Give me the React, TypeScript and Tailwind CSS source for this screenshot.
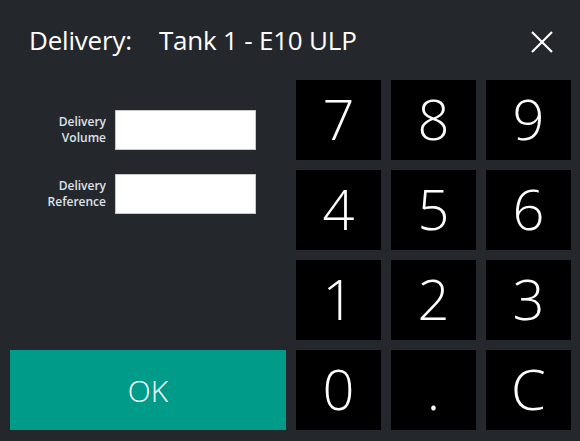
import React, { useState } from 'react';

const KEYS = ['7', '8', '9', '4', '5', '6', '1', '2', '3', '0', '.', 'C'];

const App: React.FC = () => {
    const [volume, setVolume] = useState('');
    const [reference, setReference] = useState('');

    const press = (k: string) => {
        if (k === 'C') {
            setVolume('');
            return;
        }
        setVolume(v => v + k);
    };

    return (
        <div
            className="w-[580px] h-[441px] bg-[#24282c] text-white overflow-hidden"
            style={{ fontFamily: '"Open Sans", "Noto Sans", sans-serif' }}
        >
            {/* header */}
            <div className="h-[80px] flex items-center justify-between pl-[29px] pr-[27px]">
                <h1 className="text-[26px] leading-none tracking-[-0.2px]">
                    <span>Delivery:</span>
                    <span className="ml-[27px]">Tank 1 - E10 ULP</span>
                </h1>
                <button className="w-[22px] h-[22px] flex items-center justify-center mt-[4px]">
                    <svg width="22" height="22" viewBox="0 0 22 22" fill="none" stroke="#ffffff" strokeWidth="2.2">
                        <line x1="1" y1="1" x2="21" y2="21" />
                        <line x1="21" y1="1" x2="1" y2="21" />
                    </svg>
                </button>
            </div>

            <div className="flex gap-[10px] pl-[10px]">
                {/* left column */}
                <div className="w-[276px] h-[350px] flex flex-col justify-between">
                    <div className="flex flex-col gap-[24px] pt-[30px]">
                        <div className="flex items-center gap-[9px]">
                            <label className="w-[96px] text-right text-[12px] leading-[16px] font-semibold text-[#dde3ea]">
                                Delivery<br />Volume
                            </label>
                            <input
                                value={volume}
                                onChange={e => setVolume(e.target.value)}
                                className="w-[141px] h-[40px] bg-white border border-[#c8c8c8] text-black px-2 outline-none"
                            />
                        </div>
                        <div className="flex items-center gap-[9px]">
                            <label className="w-[96px] text-right text-[12px] leading-[16px] font-semibold text-[#dde3ea]">
                                Delivery<br />Reference
                            </label>
                            <input
                                value={reference}
                                onChange={e => setReference(e.target.value)}
                                className="w-[141px] h-[40px] bg-white border border-[#c8c8c8] text-black px-2 outline-none"
                            />
                        </div>
                    </div>
                    <button className="h-[80px] w-full bg-[#009b89] text-[30px] font-light">OK</button>
                </div>

                {/* keypad */}
                <div className="w-[275px] grid grid-cols-3 auto-rows-[80px] gap-[10px]">
                    {KEYS.map(k => (
                        <button
                            key={k}
                            onClick={() => press(k)}
                            className="bg-black text-[56px] font-[350] leading-none flex items-center justify-center pb-[4px]"
                        >
                            {k}
                        </button>
                    ))}
                </div>
            </div>
        </div>
    );
};

export default App;
